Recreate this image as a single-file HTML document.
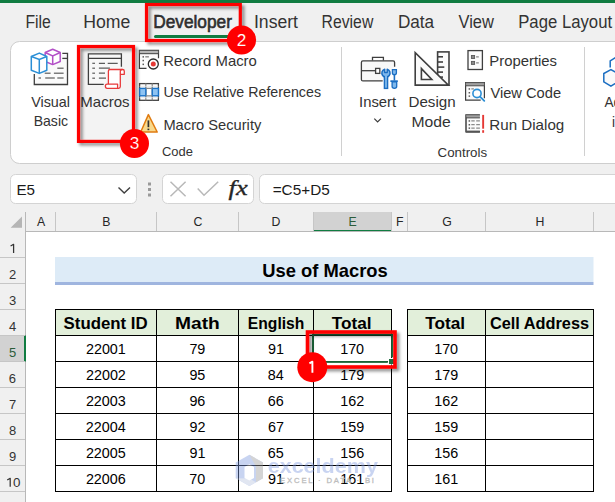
<!DOCTYPE html>
<html><head><meta charset="utf-8"><style>
html,body{margin:0;padding:0;background:#fff;overflow:hidden}
svg{display:block}
</style></head><body>
<svg width="615" height="502" viewBox="0 0 615 502">
<defs>
<filter id="sh" x="-20%" y="-20%" width="140%" height="140%">
<feDropShadow dx="2.5" dy="2.5" stdDeviation="1.8" flood-color="#000" flood-opacity="0.45"/>
</filter>
</defs>
<rect x="0" y="0" width="615" height="502" fill="#ffffff"/>
<rect x="0" y="0" width="615" height="231" fill="#f0f0f0"/>
<rect x="0" y="0" width="615" height="3" fill="#107c41"/>
<text x="25.51" y="27.70" font-family="'Liberation Sans', sans-serif" font-size="17.5" font-weight="normal" font-style="normal" fill="#333333" textLength="25.39" lengthAdjust="spacingAndGlyphs" >File</text>
<text x="83.15" y="27.70" font-family="'Liberation Sans', sans-serif" font-size="17.5" font-weight="normal" font-style="normal" fill="#333333" textLength="47.13" lengthAdjust="spacingAndGlyphs" >Home</text>
<text x="153.18" y="27.50" font-family="'Liberation Sans', sans-serif" font-size="17.5" font-weight="normal" font-style="normal" fill="#333333" textLength="78.81" lengthAdjust="spacingAndGlyphs" stroke="#262626" stroke-width="0.55">Developer</text>
<text x="253.97" y="27.70" font-family="'Liberation Sans', sans-serif" font-size="17.5" font-weight="normal" font-style="normal" fill="#333333" textLength="44.05" lengthAdjust="spacingAndGlyphs" >Insert</text>
<text x="321.61" y="27.70" font-family="'Liberation Sans', sans-serif" font-size="17.5" font-weight="normal" font-style="normal" fill="#333333" textLength="51.65" lengthAdjust="spacingAndGlyphs" >Review</text>
<text x="397.89" y="27.70" font-family="'Liberation Sans', sans-serif" font-size="17.5" font-weight="normal" font-style="normal" fill="#333333" textLength="36.21" lengthAdjust="spacingAndGlyphs" >Data</text>
<text x="458.53" y="27.70" font-family="'Liberation Sans', sans-serif" font-size="17.5" font-weight="normal" font-style="normal" fill="#333333" textLength="35.43" lengthAdjust="spacingAndGlyphs" >View</text>
<text x="518.23" y="27.70" font-family="'Liberation Sans', sans-serif" font-size="17.5" font-weight="normal" font-style="normal" fill="#333333" textLength="93.89" lengthAdjust="spacingAndGlyphs" >Page Layout</text>
<rect x="154" y="35" width="82" height="3" rx="1.5" fill="#107c41"/>
<rect x="10.5" y="41.5" width="640" height="122" rx="9" fill="#ffffff" stroke="#cecece" stroke-width="1"/>
<rect x="341" y="47" width="1" height="109" fill="#d0d0d0"/>
<rect x="584" y="47" width="1" height="109" fill="#d0d0d0"/>
<rect x="79" y="47" width="54" height="94" fill="#f3f3f3"/>
<text x="31.14" y="106.70" font-family="'Liberation Sans', sans-serif" font-size="14.8" font-weight="normal" font-style="normal" fill="#333333" textLength="38.92" lengthAdjust="spacingAndGlyphs" >Visual</text>
<text x="33.65" y="126.20" font-family="'Liberation Sans', sans-serif" font-size="14.8" font-weight="normal" font-style="normal" fill="#333333" textLength="34.43" lengthAdjust="spacingAndGlyphs" >Basic</text>
<text x="80.27" y="106.60" font-family="'Liberation Sans', sans-serif" font-size="14.8" font-weight="normal" font-style="normal" fill="#333333" textLength="49.28" lengthAdjust="spacingAndGlyphs" >Macros</text>
<text x="163.38" y="65.70" font-family="'Liberation Sans', sans-serif" font-size="14.8" font-weight="normal" font-style="normal" fill="#333333" textLength="93.45" lengthAdjust="spacingAndGlyphs" >Record Macro</text>
<text x="163.50" y="97.30" font-family="'Liberation Sans', sans-serif" font-size="14.8" font-weight="normal" font-style="normal" fill="#333333" textLength="157.51" lengthAdjust="spacingAndGlyphs" >Use Relative References</text>
<text x="163.40" y="129.60" font-family="'Liberation Sans', sans-serif" font-size="14.8" font-weight="normal" font-style="normal" fill="#333333" textLength="97.93" lengthAdjust="spacingAndGlyphs" >Macro Security</text>
<text x="161.94" y="156.40" font-family="'Liberation Sans', sans-serif" font-size="12.3" font-weight="normal" font-style="normal" fill="#333333" textLength="30.93" lengthAdjust="spacingAndGlyphs" >Code</text>
<text x="359.03" y="106.80" font-family="'Liberation Sans', sans-serif" font-size="14.8" font-weight="normal" font-style="normal" fill="#333333" textLength="37.08" lengthAdjust="spacingAndGlyphs" >Insert</text>
<text x="408.46" y="106.80" font-family="'Liberation Sans', sans-serif" font-size="14.8" font-weight="normal" font-style="normal" fill="#333333" textLength="47.13" lengthAdjust="spacingAndGlyphs" >Design</text>
<text x="411.41" y="126.70" font-family="'Liberation Sans', sans-serif" font-size="14.8" font-weight="normal" font-style="normal" fill="#333333" textLength="39.29" lengthAdjust="spacingAndGlyphs" >Mode</text>
<text x="489.28" y="65.50" font-family="'Liberation Sans', sans-serif" font-size="14.8" font-weight="normal" font-style="normal" fill="#333333" textLength="67.76" lengthAdjust="spacingAndGlyphs" >Properties</text>
<text x="490.44" y="97.70" font-family="'Liberation Sans', sans-serif" font-size="14.8" font-weight="normal" font-style="normal" fill="#333333" textLength="70.61" lengthAdjust="spacingAndGlyphs" >View Code</text>
<text x="489.26" y="129.80" font-family="'Liberation Sans', sans-serif" font-size="14.8" font-weight="normal" font-style="normal" fill="#333333" textLength="75.02" lengthAdjust="spacingAndGlyphs" >Run Dialog</text>
<text x="437.52" y="157.00" font-family="'Liberation Sans', sans-serif" font-size="12.3" font-weight="normal" font-style="normal" fill="#333333" textLength="49.66" lengthAdjust="spacingAndGlyphs" >Controls</text>
<text x="604.47" y="106.70" font-family="'Liberation Sans', sans-serif" font-size="14.8" font-weight="normal" font-style="normal" fill="#333333" textLength="28.76" lengthAdjust="spacingAndGlyphs" >Add-</text>
<text x="611.89" y="126.60" font-family="'Liberation Sans', sans-serif" font-size="14.8" font-weight="normal" font-style="normal" fill="#333333" textLength="17.41" lengthAdjust="spacingAndGlyphs" >ins</text>
<path d="M34.3 74 V84.5 H67.5 V53.4 H62.3" fill="#fafafa" stroke="#3f3f3f" stroke-width="1.3"/>
<path d="M62.3 58.4 H67.5" stroke="#3f3f3f" stroke-width="1.3"/>
<path d="M57.3 68.2 H63.6" stroke="#5c5c5c" stroke-width="1.2"/>
<path d="M44.7 73.2 H50.6" stroke="#5c5c5c" stroke-width="1.2"/>
<path d="M53.9 73.2 H63.6" stroke="#5c5c5c" stroke-width="1.2"/>
<path d="M38.5 78.0 H41" stroke="#5c5c5c" stroke-width="1.2"/>
<path d="M45.2 78.0 H54.8" stroke="#5c5c5c" stroke-width="1.2"/>
<path d="M57.3 78.0 H63.6" stroke="#5c5c5c" stroke-width="1.2"/>
<path d="M52.7 49.3 L60.2 52.5 V61.5 L52.7 64.6 L45.2 61.5 V52.5 Z" fill="#ffffff" stroke="#b34fc7" stroke-width="1.5" stroke-linejoin="round"/>
<path d="M45.2 52.5 L52.7 55.9 L60.2 52.5 M52.7 55.9 V64.6" fill="none" stroke="#b34fc7" stroke-width="1.5"/>
<path d="M39.3 53.1 L46.8 56.5 V70.3 L39.3 73.4 L31.3 70.3 V56.5 Z" fill="#ffffff" stroke="#2b8fd6" stroke-width="1.5" stroke-linejoin="round"/>
<path d="M31.3 56.5 L39.3 59.4 L46.8 56.5 M39.3 59.4 V73.4" fill="none" stroke="#2b8fd6" stroke-width="1.5"/>
<rect x="88.4" y="53.9" width="33" height="4.4" fill="#ffffff"/>
<path d="M121.4 66.8 V53.9 H88.4 V84.4 H103.7" fill="#f8f8f8" stroke="#3f3f3f" stroke-width="1.3"/>
<path d="M88.4 58.3 H121.4" stroke="#3f3f3f" stroke-width="1.3"/>
<path d="M92.3 63.3 H95" stroke="#5c5c5c" stroke-width="1.2"/>
<path d="M92.3 68.2 H95" stroke="#5c5c5c" stroke-width="1.2"/>
<path d="M92.3 73.2 H95" stroke="#5c5c5c" stroke-width="1.2"/>
<path d="M92.3 78.2 H95" stroke="#5c5c5c" stroke-width="1.2"/>
<path d="M98.9 63.3 H105 M107.7 63.3 H117.7 M98.9 68.2 H109.9 M98.9 73.2 H105 M98.9 78.2 H106" stroke="#5c5c5c" stroke-width="1.2"/>
<path d="M108.4 84.1 V71 Q108.4 69.5 110 69.5 H122.6 Q124.3 69.5 124.3 71.2 V74.3 H120.3 V86.6 Q120.3 88.3 118.6 88.3 H107.1 Q105.4 88.3 105.4 86.2 Q105.4 84.1 107.1 84.1 H117.6 V88.3" fill="#ffffff" stroke="#e8393a" stroke-width="1.3" stroke-linejoin="round"/>
<path d="M120.3 74.3 V71.2 Q120.3 69.5 122.3 69.5" fill="none" stroke="#e8393a" stroke-width="1.3"/>
<rect x="139.4" y="50.4" width="19.1" height="3.3" fill="#8a8a8a"/>
<path d="M158.5 58.3 V50.4 H139.4 V68.3 H146.5" fill="#fbfbfb" stroke="#3f3f3f" stroke-width="1.2"/>
<rect x="139.4" y="50.4" width="19.1" height="3.3" fill="#8a8a8a" opacity="0.6"/>
<path d="M139.4 53.7 H158.5" stroke="#3f3f3f" stroke-width="1"/>
<rect x="142.5" y="56.099999999999994" width="1.5" height="1.5" fill="#5c5c5c"/>
<rect x="142.5" y="59.8" width="1.5" height="1.5" fill="#5c5c5c"/>
<rect x="142.5" y="63.599999999999994" width="1.5" height="1.5" fill="#5c5c5c"/>
<path d="M145.3 56.8 H148.9" stroke="#8a8a8a" stroke-width="1.4"/>
<circle cx="153.3" cy="64" r="5" fill="#ffffff" stroke="#2a2a2a" stroke-width="1.3"/>
<circle cx="153.3" cy="64" r="2.5" fill="#e53935"/>
<rect x="139.6" y="83.6" width="18.8" height="16.7" fill="#ffffff" stroke="#444" stroke-width="1.3"/>
<path d="M145.8 83.6 V100.3 M152.25 83.6 V100.3" stroke="#888" stroke-width="1.3"/>
<path d="M145.8 88.6 V95.4" stroke="#888" stroke-width="1"/>
<path d="M139.6 86.3 H158.4 M139.6 97.7 H158.4" stroke="#e2e2e2" stroke-width="0.8"/>
<rect x="139.6" y="88.4" width="6.2" height="7.4" fill="#8ec3f2" stroke="#1a73c8" stroke-width="1.4"/>
<rect x="152.25" y="88.4" width="6.2" height="7.4" fill="#8ec3f2" stroke="#1a73c8" stroke-width="1.4"/>
<path d="M145.8 88.4 H152.25 M145.8 95.8 H152.25" stroke="#888" stroke-width="1.2"/>
<path d="M148.4 114.6 L157.2 132 H140.7 Z" fill="#f9d98c" stroke="#e07b10" stroke-width="1.5" stroke-linejoin="round"/>
<path d="M148.4 120.4 V127.2" stroke="#333" stroke-width="1.7"/>
<rect x="147.5" y="128.6" width="1.8" height="1.6" fill="#333"/>
<path d="M372.5 60.4 V57.4 H383.4 V60.4" fill="none" stroke="#3f3f3f" stroke-width="1.3"/>
<path d="M382.7 80.9 H362.9 Q361.4 80.9 361.4 79.4 V62.4 Q361.4 60.9 362.9 60.9 H393.1 Q394.6 60.9 394.6 62.4 V66.8" fill="#f8f8f8" stroke="#3f3f3f" stroke-width="1.3"/>
<path d="M361.4 70.7 H375.5" stroke="#3f3f3f" stroke-width="1.3"/>
<rect x="375.6" y="68.4" width="4.2" height="5" fill="#ffffff" stroke="#3f3f3f" stroke-width="1.3"/>
<path d="M384.7 69.2 A4.1 4.1 0 1 0 387.2 69.2 V72.4 H384.7 Z" fill="#7fb8ec" stroke="#1b6ec2" stroke-width="1.5" stroke-linejoin="round"/>
<rect x="384.4" y="76.6" width="3.2" height="11.8" fill="#7fb8ec" stroke="#1b6ec2" stroke-width="1.4"/>
<rect x="385" y="75.5" width="2" height="2.5" fill="#7fb8ec"/>
<path d="M392.4 69.6 H396.4 V73 Q396.4 74.7 394.4 74.7 Q392.4 74.7 392.4 73 Z" fill="#7fb8ec" stroke="#1b6ec2" stroke-width="1.3"/>
<rect x="393.6" y="74.5" width="1.6" height="6" fill="#1b6ec2"/>
<rect x="390.4" y="80.3" width="7.4" height="1.7" fill="#1b6ec2"/>
<path d="M392.1 81.9 H396.7 V86.6 Q396.7 88.3 394.4 88.3 Q392.1 88.3 392.1 86.6 Z" fill="#7fb8ec" stroke="#1b6ec2" stroke-width="1.3"/>
<path d="M374.3 118.6 L377.6 121.9 L380.9 118.6" fill="none" stroke="#3a3a3a" stroke-width="1.2"/>
<rect x="437.6" y="51.9" width="11.4" height="33.2" fill="#fafafa" stroke="#3f3f3f" stroke-width="1.6"/>
<path d="M437.6 56.8 H443" stroke="#3f3f3f" stroke-width="1.6"/>
<path d="M437.6 62 H443" stroke="#3f3f3f" stroke-width="1.6"/>
<path d="M437.6 67.1 H444.3" stroke="#3f3f3f" stroke-width="1.6"/>
<path d="M437.6 72.1 H443" stroke="#3f3f3f" stroke-width="1.6"/>
<path d="M437.6 77.1 H443" stroke="#3f3f3f" stroke-width="1.6"/>
<path d="M415.2 52.6 V85.1 H448.4 Z" fill="#fafafa" stroke="#3f3f3f" stroke-width="1.6" stroke-linejoin="miter"/>
<path d="M421.4 68.6 V79.5 H431.8 Z" fill="#ffffff" stroke="#3f3f3f" stroke-width="1.6"/>
<rect x="468" y="50.6" width="14.4" height="18.9" fill="#fcfcfc" stroke="#3f3f3f" stroke-width="1.3"/>
<rect x="471.4" y="55.5" width="3.2" height="3" fill="#8a8a8a" stroke="#5a5a5a" stroke-width="0.9"/>
<rect x="471.4" y="61.4" width="3.2" height="3" fill="#8a8a8a" stroke="#5a5a5a" stroke-width="0.9"/>
<path d="M476.1 56.9 H478.8 M476.1 62.9 H478.8" stroke="#888" stroke-width="1.2"/>
<path d="M484.4 98.2 V82.6 H465.6 V100.1 H480.7" fill="#fbfbfb" stroke="#3f3f3f" stroke-width="1.2"/>
<rect x="465.6" y="82.6" width="18.8" height="3.2" fill="#8a8a8a" opacity="0.8"/>
<path d="M465.6 85.8 H484.4" stroke="#3f3f3f" stroke-width="0.9"/>
<rect x="468.6" y="88.2" width="1.5" height="1.5" fill="#5c5c5c"/>
<rect x="468.6" y="92.0" width="1.5" height="1.5" fill="#5c5c5c"/>
<rect x="468.6" y="95.39999999999999" width="1.5" height="1.5" fill="#5c5c5c"/>
<path d="M471.3 88.9 H473.9" stroke="#8a8a8a" stroke-width="1.3"/>
<circle cx="477" cy="93.5" r="4.1" fill="#ffffff" stroke="#2b8fd6" stroke-width="1.6"/>
<path d="M480 96.6 L484.3 100.9" stroke="#2b8fd6" stroke-width="1.8" stroke-linecap="round"/>
<path d="M479.9 114.9 H466 V131.8 H479.9" fill="#fbfbfb" stroke="#333" stroke-width="1.4"/>
<rect x="466" y="114.9" width="13.9" height="3" fill="#8a8a8a" opacity="0.8"/>
<path d="M466 117.9 H479.9" stroke="#3f3f3f" stroke-width="0.9"/>
<rect x="466" y="130.6" width="13.9" height="2" fill="#555"/>
<rect x="468.6" y="120.2" width="1.5" height="1.5" fill="#5c5c5c"/>
<path d="M471.3 120.9 H474.7 M476.2 120.9 H479.9" stroke="#8a8a8a" stroke-width="1.3"/>
<rect x="468.6" y="124.0" width="1.5" height="1.5" fill="#5c5c5c"/>
<path d="M471.3 124.7 H474.7 M476.2 124.7 H479.9" stroke="#8a8a8a" stroke-width="1.3"/>
<rect x="468.6" y="127.39999999999999" width="1.5" height="1.5" fill="#5c5c5c"/>
<path d="M471.3 128.1 H474.7 M476.2 128.1 H479.9" stroke="#8a8a8a" stroke-width="1.3"/>
<rect x="482.2" y="114.9" width="1.9" height="13.8" fill="#e53935"/>
<rect x="482.2" y="130.2" width="1.9" height="2.6" fill="#e53935"/>
<path d="M610.9 69.7 L603.8 73.5 V81.8 L610.9 86.2 L618 81.8 V73.5 Z" fill="#fafafa" stroke="#1b6ec2" stroke-width="1.5"/>
<path d="M610.2 67.6 V60.8 L616 57.2" fill="none" stroke="#1b6ec2" stroke-width="1.5"/>
<rect x="10.5" y="174.5" width="126" height="29" rx="5" fill="#ffffff" stroke="#d4d4d4"/>
<text x="16.45" y="195.00" font-family="'Liberation Sans', sans-serif" font-size="14.8" font-weight="normal" font-style="normal" fill="#1a1a1a" textLength="18.58" lengthAdjust="spacingAndGlyphs" >E5</text>
<path d="M118.5 187.5 L124.2 193 L130 187.5" fill="none" stroke="#404040" stroke-width="1.4"/>
<rect x="148" y="182.5" width="3" height="3" fill="#9a9a9a"/>
<rect x="148" y="188.0" width="3" height="3" fill="#9a9a9a"/>
<rect x="148" y="193.5" width="3" height="3" fill="#9a9a9a"/>
<rect x="162.5" y="174.5" width="91" height="29" rx="5" fill="#ffffff" stroke="#d4d4d4"/>
<path d="M170.5 181.7 L185.6 196.3 M185.6 181.7 L170.5 196.3" stroke="#b8b8b8" stroke-width="1.5" fill="none"/>
<path d="M197.7 188.5 L204 195.2 L218.2 181.7" stroke="#b8b8b8" stroke-width="1.5" fill="none"/>
<text x="228.60" y="195.30" font-family="'Liberation Serif', serif" font-size="21" font-weight="normal" font-style="italic" fill="#262626" textLength="18.99" lengthAdjust="spacingAndGlyphs" stroke="#262626" stroke-width="0.35">fx</text>
<rect x="259.5" y="174.5" width="400" height="29" rx="5" fill="#ffffff" stroke="#d4d4d4"/>
<text x="272.65" y="194.80" font-family="'Liberation Sans', sans-serif" font-size="15" font-weight="normal" font-style="normal" fill="#1a1a1a" textLength="57.09" lengthAdjust="spacingAndGlyphs" >=C5+D5</text>
<rect x="313" y="212" width="78.5" height="19" fill="#d2d2d2"/>
<rect x="313" y="230" width="78.5" height="2" fill="#107c41"/>
<rect x="55" y="212" width="1" height="19" fill="#c6c6c6"/>
<rect x="156" y="212" width="1" height="19" fill="#c6c6c6"/>
<rect x="238" y="212" width="1" height="19" fill="#c6c6c6"/>
<rect x="313" y="212" width="1" height="19" fill="#c6c6c6"/>
<rect x="391" y="212" width="1" height="19" fill="#c6c6c6"/>
<rect x="407" y="212" width="1" height="19" fill="#c6c6c6"/>
<rect x="485" y="212" width="1" height="19" fill="#c6c6c6"/>
<rect x="593" y="212" width="1" height="19" fill="#c6c6c6"/>
<rect x="700" y="212" width="1" height="19" fill="#c6c6c6"/>
<rect x="25" y="212" width="1" height="290" fill="#b8b8b8"/>
<rect x="0" y="231" width="615" height="1" fill="#b8b8b8"/>
<path d="M10.6 227.8 L22 227.8 L22 216.4 Z" fill="#b5b5b5"/>
<text x="36.90" y="226.10" font-family="'Liberation Sans', sans-serif" font-size="12.3" font-weight="normal" font-style="normal" fill="#262626" textLength="8.20" lengthAdjust="spacingAndGlyphs" >A</text>
<text x="102.22" y="226.10" font-family="'Liberation Sans', sans-serif" font-size="12.3" font-weight="normal" font-style="normal" fill="#262626" textLength="8.20" lengthAdjust="spacingAndGlyphs" >B</text>
<text x="193.48" y="226.10" font-family="'Liberation Sans', sans-serif" font-size="12.3" font-weight="normal" font-style="normal" fill="#262626" textLength="8.88" lengthAdjust="spacingAndGlyphs" >C</text>
<text x="271.60" y="226.10" font-family="'Liberation Sans', sans-serif" font-size="12.3" font-weight="normal" font-style="normal" fill="#262626" textLength="8.88" lengthAdjust="spacingAndGlyphs" >D</text>
<text x="348.41" y="226.10" font-family="'Liberation Sans', sans-serif" font-size="12.3" font-weight="normal" font-style="normal" fill="#2b5c3a" textLength="8.20" lengthAdjust="spacingAndGlyphs" >E</text>
<text x="395.99" y="226.10" font-family="'Liberation Sans', sans-serif" font-size="12.3" font-weight="normal" font-style="normal" fill="#262626" textLength="7.51" lengthAdjust="spacingAndGlyphs" >F</text>
<text x="442.37" y="226.10" font-family="'Liberation Sans', sans-serif" font-size="12.3" font-weight="normal" font-style="normal" fill="#262626" textLength="9.57" lengthAdjust="spacingAndGlyphs" >G</text>
<text x="535.56" y="226.10" font-family="'Liberation Sans', sans-serif" font-size="12.3" font-weight="normal" font-style="normal" fill="#262626" textLength="8.88" lengthAdjust="spacingAndGlyphs" >H</text>
<rect x="0" y="231" width="25" height="271" fill="#f0f0f0"/>
<rect x="0" y="335.5" width="25" height="26" fill="#d2d2d2"/>
<rect x="24" y="335.5" width="2" height="26" fill="#107c41"/>
<rect x="0" y="257" width="25" height="1" fill="#c6c6c6"/>
<rect x="0" y="283" width="25" height="1" fill="#c6c6c6"/>
<rect x="0" y="309" width="25" height="1" fill="#c6c6c6"/>
<rect x="0" y="335" width="25" height="1" fill="#c6c6c6"/>
<rect x="0" y="361" width="25" height="1" fill="#c6c6c6"/>
<rect x="0" y="387" width="25" height="1" fill="#c6c6c6"/>
<rect x="0" y="413" width="25" height="1" fill="#c6c6c6"/>
<rect x="0" y="439" width="25" height="1" fill="#c6c6c6"/>
<rect x="0" y="465" width="25" height="1" fill="#c6c6c6"/>
<rect x="0" y="491" width="25" height="1" fill="#c6c6c6"/>
<rect x="0" y="517" width="25" height="1" fill="#c6c6c6"/>
<path d="M10.60 246.00 L13.60 244.30 V253.00" fill="none" stroke="#333333" stroke-width="1.25" stroke-linejoin="round"/>
<text x="8.89" y="279.00" font-family="'Liberation Sans', sans-serif" font-size="13" font-weight="normal" font-style="normal" fill="#333333" textLength="7.23" lengthAdjust="spacingAndGlyphs" >2</text>
<text x="8.92" y="305.00" font-family="'Liberation Sans', sans-serif" font-size="13" font-weight="normal" font-style="normal" fill="#333333" textLength="7.23" lengthAdjust="spacingAndGlyphs" >3</text>
<text x="8.93" y="331.00" font-family="'Liberation Sans', sans-serif" font-size="13" font-weight="normal" font-style="normal" fill="#333333" textLength="7.23" lengthAdjust="spacingAndGlyphs" >4</text>
<text x="8.90" y="357.00" font-family="'Liberation Sans', sans-serif" font-size="13" font-weight="normal" font-style="normal" fill="#2b5c3a" textLength="7.23" lengthAdjust="spacingAndGlyphs" >5</text>
<text x="8.84" y="383.00" font-family="'Liberation Sans', sans-serif" font-size="13" font-weight="normal" font-style="normal" fill="#333333" textLength="7.23" lengthAdjust="spacingAndGlyphs" >6</text>
<text x="8.88" y="409.00" font-family="'Liberation Sans', sans-serif" font-size="13" font-weight="normal" font-style="normal" fill="#333333" textLength="7.23" lengthAdjust="spacingAndGlyphs" >7</text>
<text x="8.89" y="435.00" font-family="'Liberation Sans', sans-serif" font-size="13" font-weight="normal" font-style="normal" fill="#333333" textLength="7.23" lengthAdjust="spacingAndGlyphs" >8</text>
<text x="8.89" y="461.00" font-family="'Liberation Sans', sans-serif" font-size="13" font-weight="normal" font-style="normal" fill="#333333" textLength="7.23" lengthAdjust="spacingAndGlyphs" >9</text>
<path d="M7.20 480.00 L10.20 478.30 V486.80" fill="none" stroke="#333333" stroke-width="1.25" stroke-linejoin="round"/>
<text x="12.98" y="486.80" font-family="'Liberation Sans', sans-serif" font-size="13" font-weight="normal" font-style="normal" fill="#333333" textLength="7.45" lengthAdjust="spacingAndGlyphs" >0</text>
<rect x="55" y="257" width="538.5" height="25" fill="#ddebf7"/>
<rect x="55" y="282" width="538.5" height="3" fill="#9fb5df"/>
<text x="262.30" y="276.90" font-family="'Liberation Sans', sans-serif" font-size="19" font-weight="bold" font-style="normal" fill="#000000" textLength="125.46" lengthAdjust="spacingAndGlyphs" >Use of Macros</text>
<rect x="56" y="310" width="335" height="25" fill="#e2efda"/>
<rect x="55" y="309" width="337" height="1" fill="#000"/>
<rect x="55" y="335" width="337" height="1" fill="#000"/>
<rect x="55" y="361" width="337" height="1" fill="#000"/>
<rect x="55" y="387" width="337" height="1" fill="#000"/>
<rect x="55" y="413" width="337" height="1" fill="#000"/>
<rect x="55" y="439" width="337" height="1" fill="#000"/>
<rect x="55" y="465" width="337" height="1" fill="#000"/>
<rect x="55" y="491" width="337" height="1" fill="#000"/>
<rect x="55" y="309" width="1" height="183" fill="#000"/>
<rect x="156" y="309" width="1" height="183" fill="#000"/>
<rect x="238" y="309" width="1" height="183" fill="#000"/>
<rect x="313" y="309" width="1" height="183" fill="#000"/>
<rect x="391" y="309" width="1" height="183" fill="#000"/>
<text x="63.62" y="328.60" font-family="'Liberation Sans', sans-serif" font-size="16.3" font-weight="bold" font-style="normal" fill="#000" textLength="84.09" lengthAdjust="spacingAndGlyphs" >Student ID</text>
<text x="175.02" y="328.60" font-family="'Liberation Sans', sans-serif" font-size="16.3" font-weight="bold" font-style="normal" fill="#000" textLength="44.77" lengthAdjust="spacingAndGlyphs" >Math</text>
<text x="247.85" y="328.60" font-family="'Liberation Sans', sans-serif" font-size="16.3" font-weight="bold" font-style="normal" fill="#000" textLength="56.52" lengthAdjust="spacingAndGlyphs" >English</text>
<text x="331.81" y="328.60" font-family="'Liberation Sans', sans-serif" font-size="16.3" font-weight="bold" font-style="normal" fill="#000" textLength="39.87" lengthAdjust="spacingAndGlyphs" >Total</text>
<text x="85.93" y="353.90" font-family="'Liberation Sans', sans-serif" font-size="15.4" font-weight="normal" font-style="normal" fill="#000" textLength="39.92" lengthAdjust="spacingAndGlyphs" >22001</text>
<text x="189.39" y="353.90" font-family="'Liberation Sans', sans-serif" font-size="15.4" font-weight="normal" font-style="normal" fill="#000" textLength="15.97" lengthAdjust="spacingAndGlyphs" >79</text>
<text x="267.93" y="353.90" font-family="'Liberation Sans', sans-serif" font-size="15.4" font-weight="normal" font-style="normal" fill="#000" textLength="15.97" lengthAdjust="spacingAndGlyphs" >91</text>
<text x="340.16" y="353.90" font-family="'Liberation Sans', sans-serif" font-size="15.4" font-weight="normal" font-style="normal" fill="#000" textLength="23.95" lengthAdjust="spacingAndGlyphs" >170</text>
<text x="85.94" y="379.90" font-family="'Liberation Sans', sans-serif" font-size="15.4" font-weight="normal" font-style="normal" fill="#000" textLength="39.92" lengthAdjust="spacingAndGlyphs" >22002</text>
<text x="189.38" y="379.90" font-family="'Liberation Sans', sans-serif" font-size="15.4" font-weight="normal" font-style="normal" fill="#000" textLength="15.97" lengthAdjust="spacingAndGlyphs" >95</text>
<text x="267.81" y="379.90" font-family="'Liberation Sans', sans-serif" font-size="15.4" font-weight="normal" font-style="normal" fill="#000" textLength="15.97" lengthAdjust="spacingAndGlyphs" >84</text>
<text x="340.22" y="379.90" font-family="'Liberation Sans', sans-serif" font-size="15.4" font-weight="normal" font-style="normal" fill="#000" textLength="23.95" lengthAdjust="spacingAndGlyphs" >179</text>
<text x="85.89" y="405.90" font-family="'Liberation Sans', sans-serif" font-size="15.4" font-weight="normal" font-style="normal" fill="#000" textLength="39.92" lengthAdjust="spacingAndGlyphs" >22003</text>
<text x="189.39" y="405.90" font-family="'Liberation Sans', sans-serif" font-size="15.4" font-weight="normal" font-style="normal" fill="#000" textLength="15.97" lengthAdjust="spacingAndGlyphs" >96</text>
<text x="267.87" y="405.90" font-family="'Liberation Sans', sans-serif" font-size="15.4" font-weight="normal" font-style="normal" fill="#000" textLength="15.97" lengthAdjust="spacingAndGlyphs" >66</text>
<text x="340.24" y="405.90" font-family="'Liberation Sans', sans-serif" font-size="15.4" font-weight="normal" font-style="normal" fill="#000" textLength="23.95" lengthAdjust="spacingAndGlyphs" >162</text>
<text x="85.79" y="431.90" font-family="'Liberation Sans', sans-serif" font-size="15.4" font-weight="normal" font-style="normal" fill="#000" textLength="39.92" lengthAdjust="spacingAndGlyphs" >22004</text>
<text x="189.44" y="431.90" font-family="'Liberation Sans', sans-serif" font-size="15.4" font-weight="normal" font-style="normal" fill="#000" textLength="15.97" lengthAdjust="spacingAndGlyphs" >92</text>
<text x="267.91" y="431.90" font-family="'Liberation Sans', sans-serif" font-size="15.4" font-weight="normal" font-style="normal" fill="#000" textLength="15.97" lengthAdjust="spacingAndGlyphs" >67</text>
<text x="340.22" y="431.90" font-family="'Liberation Sans', sans-serif" font-size="15.4" font-weight="normal" font-style="normal" fill="#000" textLength="23.95" lengthAdjust="spacingAndGlyphs" >159</text>
<text x="85.88" y="457.90" font-family="'Liberation Sans', sans-serif" font-size="15.4" font-weight="normal" font-style="normal" fill="#000" textLength="39.92" lengthAdjust="spacingAndGlyphs" >22005</text>
<text x="189.43" y="457.90" font-family="'Liberation Sans', sans-serif" font-size="15.4" font-weight="normal" font-style="normal" fill="#000" textLength="15.97" lengthAdjust="spacingAndGlyphs" >91</text>
<text x="267.85" y="457.90" font-family="'Liberation Sans', sans-serif" font-size="15.4" font-weight="normal" font-style="normal" fill="#000" textLength="15.97" lengthAdjust="spacingAndGlyphs" >65</text>
<text x="340.19" y="457.90" font-family="'Liberation Sans', sans-serif" font-size="15.4" font-weight="normal" font-style="normal" fill="#000" textLength="23.95" lengthAdjust="spacingAndGlyphs" >156</text>
<text x="85.89" y="483.90" font-family="'Liberation Sans', sans-serif" font-size="15.4" font-weight="normal" font-style="normal" fill="#000" textLength="39.92" lengthAdjust="spacingAndGlyphs" >22006</text>
<text x="189.33" y="483.90" font-family="'Liberation Sans', sans-serif" font-size="15.4" font-weight="normal" font-style="normal" fill="#000" textLength="15.97" lengthAdjust="spacingAndGlyphs" >70</text>
<text x="267.93" y="483.90" font-family="'Liberation Sans', sans-serif" font-size="15.4" font-weight="normal" font-style="normal" fill="#000" textLength="15.97" lengthAdjust="spacingAndGlyphs" >91</text>
<text x="340.23" y="483.90" font-family="'Liberation Sans', sans-serif" font-size="15.4" font-weight="normal" font-style="normal" fill="#000" textLength="23.95" lengthAdjust="spacingAndGlyphs" >161</text>
<rect x="408" y="310" width="185" height="25" fill="#e2efda"/>
<rect x="407" y="309" width="187" height="1" fill="#000"/>
<rect x="407" y="335" width="187" height="1" fill="#000"/>
<rect x="407" y="361" width="187" height="1" fill="#000"/>
<rect x="407" y="387" width="187" height="1" fill="#000"/>
<rect x="407" y="413" width="187" height="1" fill="#000"/>
<rect x="407" y="439" width="187" height="1" fill="#000"/>
<rect x="407" y="465" width="187" height="1" fill="#000"/>
<rect x="407" y="491" width="187" height="1" fill="#000"/>
<rect x="407" y="309" width="1" height="183" fill="#000"/>
<rect x="485" y="309" width="1" height="183" fill="#000"/>
<rect x="593" y="309" width="1" height="183" fill="#000"/>
<text x="425.16" y="328.60" font-family="'Liberation Sans', sans-serif" font-size="16.3" font-weight="bold" font-style="normal" fill="#000" textLength="39.87" lengthAdjust="spacingAndGlyphs" >Total</text>
<text x="489.93" y="328.60" font-family="'Liberation Sans', sans-serif" font-size="16.3" font-weight="bold" font-style="normal" fill="#000" textLength="99.13" lengthAdjust="spacingAndGlyphs" >Cell Address</text>
<text x="434.16" y="353.90" font-family="'Liberation Sans', sans-serif" font-size="15.4" font-weight="normal" font-style="normal" fill="#000" textLength="23.95" lengthAdjust="spacingAndGlyphs" >170</text>
<text x="434.22" y="379.90" font-family="'Liberation Sans', sans-serif" font-size="15.4" font-weight="normal" font-style="normal" fill="#000" textLength="23.95" lengthAdjust="spacingAndGlyphs" >179</text>
<text x="434.24" y="405.90" font-family="'Liberation Sans', sans-serif" font-size="15.4" font-weight="normal" font-style="normal" fill="#000" textLength="23.95" lengthAdjust="spacingAndGlyphs" >162</text>
<text x="434.22" y="431.90" font-family="'Liberation Sans', sans-serif" font-size="15.4" font-weight="normal" font-style="normal" fill="#000" textLength="23.95" lengthAdjust="spacingAndGlyphs" >159</text>
<text x="434.19" y="457.90" font-family="'Liberation Sans', sans-serif" font-size="15.4" font-weight="normal" font-style="normal" fill="#000" textLength="23.95" lengthAdjust="spacingAndGlyphs" >156</text>
<text x="434.23" y="483.90" font-family="'Liberation Sans', sans-serif" font-size="15.4" font-weight="normal" font-style="normal" fill="#000" textLength="23.95" lengthAdjust="spacingAndGlyphs" >161</text>
<rect x="312" y="333.8" width="81" height="1.8" fill="#1d6b3e"/>
<rect x="312" y="333.8" width="1.9" height="29" fill="#1d6b3e"/>
<rect x="391.2" y="333.8" width="1.9" height="23.6" fill="#1d6b3e"/>
<rect x="312" y="361.1" width="75.8" height="1.8" fill="#1d6b3e"/>
<rect x="388" y="358" width="6.5" height="6.5" fill="#ffffff"/>
<rect x="389" y="359" width="5" height="5" fill="#1d6b3e"/>
<g opacity="0.42">
<path d="M249.4 454.8 L263 462.6 V478.3 L249.4 486.1 L235.7 478.3 V462.6 Z" fill="#7d9ae0"/>
<path d="M249.4 454.8 L263 462.6 V478.3 L256 482.3 V466.5 Z" fill="#9a9a9a"/>
<path d="M235.7 478.3 L249.4 486.1 L256 482.3 L249.4 478.5 Z" fill="#b8c4e0"/>
<path d="M244.5 467 L249.4 464.3 L254 467 V478 L249.4 480.6 L244.5 478 Z" fill="#ffffff"/>
<text x="267.66" y="473.00" font-family="'Liberation Sans', sans-serif" font-size="20.5" font-weight="bold" font-style="normal" fill="#7f9be0" textLength="110.26" lengthAdjust="spacingAndGlyphs" >exceldemy</text>
</g>
<text x="280.11" y="482.60" font-family="'Liberation Sans', sans-serif" font-size="7.7" font-weight="normal" font-style="normal" fill="#bdbdbd" textLength="93.89" lengthAdjust="spacing" stroke="#bdbdbd" stroke-width="0.3">EXCEL · DATA · BI</text>
<g filter="url(#sh)">
<rect x="146.5" y="4.5" width="93.8" height="36" fill="none" stroke="#ff0000" stroke-width="3.2"/>
<rect x="78.5" y="46.5" width="55" height="94.9" fill="none" stroke="#ff0000" stroke-width="3.2"/>
<rect x="307.5" y="332" width="87.5" height="35" fill="none" stroke="#ff0000" stroke-width="3.6"/>
</g>
<circle cx="241.5" cy="40" r="14.6" fill="#ff0000"/>
<text x="236.72" y="45.70" font-family="'Liberation Sans', sans-serif" font-size="17.2" font-weight="normal" font-style="normal" fill="#ffffff" textLength="9.57" lengthAdjust="spacingAndGlyphs" stroke="#ff0000" stroke-width="0.15">2</text>
<circle cx="134.45" cy="143.55" r="14.55" fill="#ff0000"/>
<text x="129.72" y="149.25" font-family="'Liberation Sans', sans-serif" font-size="17.2" font-weight="normal" font-style="normal" fill="#ffffff" textLength="9.57" lengthAdjust="spacingAndGlyphs" stroke="#ff0000" stroke-width="0.15">3</text>
<circle cx="312.3" cy="367.2" r="15" fill="#ff0000"/>
<path d="M309.40 363.40 L312.40 361.70 V372.80" fill="none" stroke="#ffffff" stroke-width="1.9" stroke-linejoin="round"/>
</svg>
</body></html>
